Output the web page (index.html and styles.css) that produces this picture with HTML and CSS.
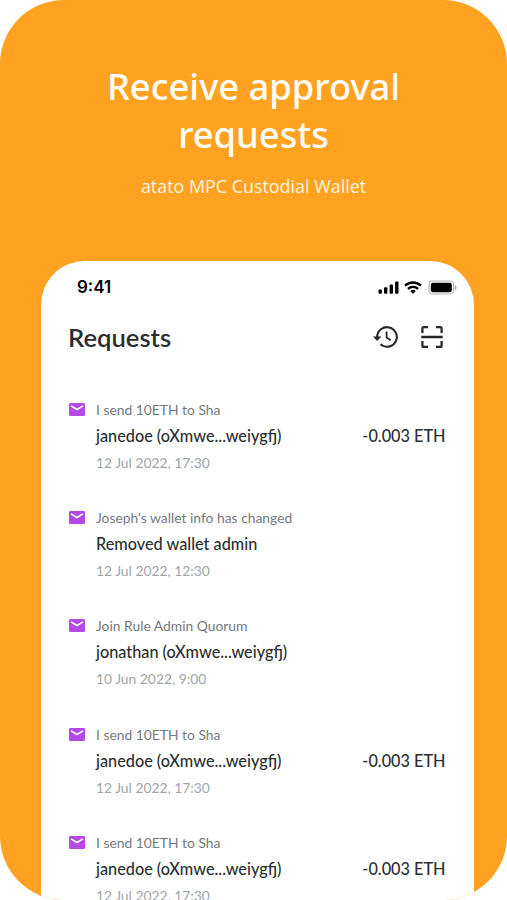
FILE: index.html
```html
<!DOCTYPE html>
<html lang="en">
<head>
<meta charset="utf-8">
<title>atato MPC Custodial Wallet</title>
<link rel="stylesheet" href="styles.css">
</head>
<body>
<svg class="defs" aria-hidden="true">
  <symbol id="mail" viewBox="0 0 16 13">
    <rect width="16" height="13" rx="1.3" fill="#b44ae6"/>
    <path d="M2 2.8 8 6.5l6-3.7" fill="none" stroke="#fff" stroke-width="1.5"/>
  </symbol>
</svg>
<main class="poster">
  <header class="intro">
    <h1>Receive approval<br>requests</h1>
    <p>atato MPC Custodial Wallet</p>
  </header>
  <section class="phone">
    <div class="status">
      <span class="time">9:41</span>
      <svg class="signal" width="21" height="13" viewBox="0 0 21 13"><rect x="0.5" y="8.5" width="3.4" height="4.2" rx="1"/><rect x="6" y="6.3" width="3.4" height="6.4" rx="1"/><rect x="11.6" y="3.6" width="3.4" height="9.1" rx="1"/><rect x="17.1" y="0.6" width="3.4" height="12.1" rx="1"/></svg>
      <svg class="wifi" width="18" height="13" viewBox="0 0 18 13"><g fill="none" stroke="#000" stroke-width="2.3"><path d="M1 4.7a11.6 11.6 0 0 1 16 0"/><path d="M4 7.9a7.2 7.2 0 0 1 10 0"/></g><path d="M6.3 10.1a4 4 0 0 1 5.4 0L9 12.9z"/></svg>
      <svg class="battery" width="30" height="15" viewBox="0 0 30 15"><rect x="1" y="1" width="24.6" height="13" rx="3.6" fill="none" stroke="#b5b5b5" stroke-width="1.2"/><rect x="2.8" y="2.8" width="21" height="9.4" rx="2"/><path d="M27 5.2c2 .7 2 3.9 0 4.6z" fill="#a8a8a8"/></svg>
    </div>
    <div class="title">
      <h2>Requests</h2>
      <svg class="history" width="26" height="24" viewBox="0 0 26 24"><g fill="none" stroke="#25282b" stroke-width="2.1"><path d="M4.2 12a9.8 9.8 0 1 1 3.3 7.3"/><path d="M13.6 6.5v6.1l4.1 2.7" stroke-width="1.8"/></g><path d="M0 11.6h8.4l-4.2 4.5z" fill="#25282b"/></svg>
      <svg class="scan" width="22" height="22" viewBox="0 0 22 22"><g fill="none" stroke="#25282b" stroke-width="2.3"><path d="M1.4 7V2.6q0-1.4 1.4-1.4H7M15 1.2h4.2q1.4 0 1.4 1.4V7M20.6 15v4.4q0 1.4-1.4 1.4H15M7 20.8H2.8q-1.4 0-1.4-1.4V15M.3 11h21.4"/></g></svg>
    </div>
    <ul class="list">
      <li><svg class="mail"><use href="#mail"/></svg><span class="note">I send 10ETH to Sha</span><strong>janedoe (oXmwe...weiygfj)</strong><b>-0.003 ETH</b><time>12 Jul 2022, 17:30</time></li>
      <li><svg class="mail"><use href="#mail"/></svg><span class="note">Joseph's wallet info has changed</span><strong>Removed wallet admin</strong><time>12 Jul 2022, 12:30</time></li>
      <li><svg class="mail"><use href="#mail"/></svg><span class="note">Join Rule Admin Quorum</span><strong>jonathan (oXmwe...weiygfj)</strong><time>10 Jun 2022, 9:00</time></li>
      <li><svg class="mail"><use href="#mail"/></svg><span class="note">I send 10ETH to Sha</span><strong>janedoe (oXmwe...weiygfj)</strong><b>-0.003 ETH</b><time>12 Jul 2022, 17:30</time></li>
      <li><svg class="mail"><use href="#mail"/></svg><span class="note">I send 10ETH to Sha</span><strong>janedoe (oXmwe...weiygfj)</strong><b>-0.003 ETH</b><time>12 Jul 2022, 17:30</time></li>
    </ul>
  </section>
</main>
</body>
</html>
```
FILE: styles.css
```css
* { box-sizing: border-box; margin: 0; padding: 0; }
html, body { height: 900px; overflow: hidden; background: #fff; }
svg { display: block; flex: none; }
.defs { display: none; }
.poster {
  height: 900px;
  overflow: hidden;
  border-radius: 64px;
  background: #ffa221;
  display: flex;
  flex-direction: column;
}
.intro {
  height: 261px;
  flex: none;
  padding-top: 62px;
  text-align: center;
  color: #fffdf5;
  font-family: "Noto Sans", "Open Sans", sans-serif;
}
.intro h1 { font-size: 36.3px; line-height: 48px; font-weight: 500; }
.intro p { margin-top: 16px; font-family: "Open Sans", sans-serif; font-size: 17.9px; line-height: 24px; color: #fff4de; }
.phone {
  width: 433px;
  height: 639px;
  flex: none;
  margin-left: 40.5px;
  border-radius: 44px 44px 0 0;
  background: #fff;
  font-family: Lato, sans-serif;
  color: #2b2e30;
}
.status {
  height: 52px;
  padding: 0 16px 0 36.5px;
  display: flex;
  align-items: center;
}
.time { margin-right: auto; font: 600 17px/20px Inter, sans-serif; color: #000; }
.wifi { margin: 0 6px 0 5px; }
.title {
  height: 48px;
  padding: 0 30.5px 0 27.5px;
  display: flex;
  align-items: center;
}
.title h2 { margin-right: auto; font-size: 25.6px; line-height: 32px; font-weight: 600; }
.scan { margin-left: 22px; }
.list { list-style: none; padding: 36px 28px 0 28.5px; }
.list li {
  height: 108.45px;
  display: grid;
  grid-template-columns: 27px auto 1fr;
  grid-template-rows: 24px 28px 26px;
  align-items: center;
}
.mail { width: 16px; height: 13px; }
.note { grid-column: 2 / 4; font-size: 13.85px; color: #747b80; }
.list strong { grid-column: 2; font-size: 16.25px; font-weight: 500; }
.list b { grid-column: 3; justify-self: end; font-size: 16.25px; font-weight: 500; }
.list time { grid-column: 2 / 4; font-size: 13.85px; color: #a0a6a9; }
```
